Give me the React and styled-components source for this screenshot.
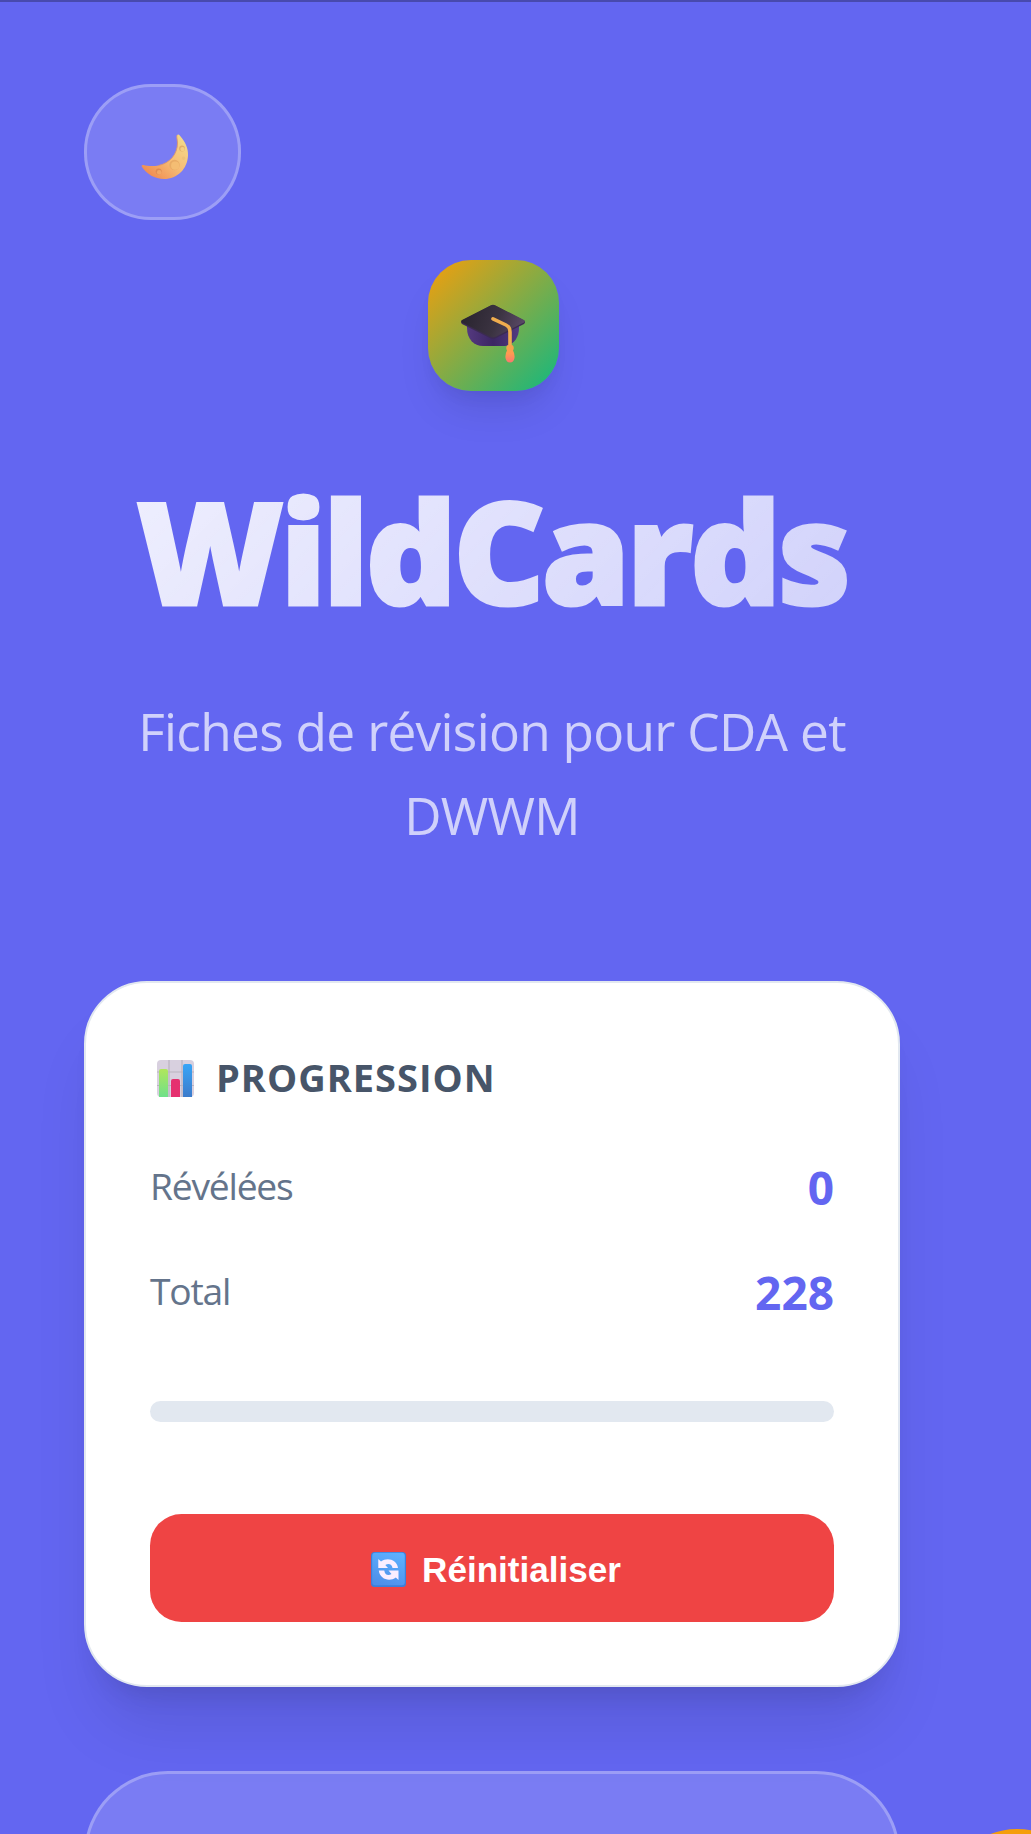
import React from "react";
import styled, { createGlobalStyle } from "styled-components";

const GlobalStyle = createGlobalStyle`
  *, *::before, *::after { box-sizing: border-box; }
  html, body { margin: 0; padding: 0; background: #6366f1; }
  body { font-family: "Open Sans", "Noto Sans", sans-serif; }
`;

const Page = styled.div`
  position: relative;
  height: 1834px;
  overflow: hidden;
  padding: 82px 131px 0 84px;
  background: #6366f1;
  border-top: 2px solid #484aae;
`;

const ThemeToggle = styled.button`
  display: flex;
  align-items: center;
  justify-content: center;
  width: 157px;
  height: 136px;
  padding: 10px 0 0 5px;
  border: 3px solid rgba(255, 255, 255, 0.26);
  border-radius: 67px;
  background: rgba(255, 255, 255, 0.15);
`;

const Hero = styled.header`
  display: flex;
  flex-direction: column;
  align-items: center;
  padding-top: 40px;
`;

const Logo = styled.div`
  display: flex;
  align-items: center;
  justify-content: center;
  width: 131px;
  height: 131px;
  margin-left: 3px;
  padding-right: 1px;
  border-radius: 43px;
  background: linear-gradient(135deg, #f59e0b, #10b981);
  box-shadow: 0 26px 39px -8px rgba(0, 0, 0, 0.1), 0 10px 16px -5px rgba(0, 0, 0, 0.05);
`;

const Title = styled.h1`
  margin: 61px 0 0;
  padding: 0 10px;
  font-size: 142px;
  font-weight: 800;
  line-height: 196px;
  letter-spacing: -3.5px;
  white-space: nowrap;
  color: transparent;
  -webkit-text-stroke: 3px transparent;
  background: linear-gradient(135deg, rgba(255, 255, 255, 0.9), rgba(255, 255, 255, 0.7));
  background-clip: text;
  -webkit-background-clip: text;
`;

const Subtitle = styled.p`
  margin: 41px 0 0;
  width: 740px;
  font-size: 51.4px;
  line-height: 84px;
  letter-spacing: -0.7px;
  text-align: center;
  color: rgba(255, 255, 255, 0.7);
`;

const Card = styled.section`
  height: 706px;
  margin-top: 124px;
  padding: 61px 64px 0;
  border: 2px solid #e2e8f0;
  border-radius: 63px;
  background: #fff;
  box-shadow: 0 52px 65px -13px rgba(0, 0, 0, 0.1), 0 21px 26px -15px rgba(0, 0, 0, 0.1);
`;

const CardTitle = styled.h2`
  display: flex;
  align-items: center;
  gap: 22px;
  height: 66px;
  margin: 0 0 21px;
  padding-left: 7px;
  font-size: 38px;
  font-weight: 700;
  letter-spacing: 1px;
  color: #475569;
`;

const Stat = styled.div`
  display: flex;
  align-items: center;
  justify-content: space-between;
  height: 105px;
`;

const StatLabel = styled.span`
  padding-top: 3px;
  font-size: 37.2px;
  letter-spacing: -1.2px;
  color: #64748b;
`;

const StatValue = styled.span`
  padding-top: 6px;
  font-size: 46px;
  font-weight: 700;
  color: #6366f1;
`;

const Track = styled.div`
  height: 21px;
  margin-top: 60px;
  border-radius: 10.5px;
  background: #e2e8f0;
`;

const ResetButton = styled.button`
  display: flex;
  align-items: center;
  justify-content: center;
  gap: 16px;
  width: 100%;
  height: 108px;
  margin-top: 92px;
  padding: 4px 0 0 8px;
  border: 0;
  border-radius: 31.5px;
  background: #ef4444;
  color: #fff;
  font: 700 35.1px "Liberation Sans", Arial, sans-serif;
`;

const Panel = styled.section`
  height: 300px;
  margin-top: 84px;
  border: 3px solid rgba(255, 255, 255, 0.26);
  border-radius: 84px;
  background: rgba(255, 255, 255, 0.15);
`;

const FloatingButton = styled.button`
  position: absolute;
  top: 1827px;
  left: 944px;
  width: 146px;
  height: 146px;
  border: 0;
  border-radius: 50%;
  background: #f59e0b;
`;

const Icon = styled.svg`
  display: block;
  flex: none;
  margin-top: ${(p) => p.$offset || 0}px;
`;

const MoonIcon = () => (
  <Icon width="48" height="46" viewBox="0 0 48 46" aria-hidden="true">
    <defs>
      <linearGradient id="moon" x1="0.9" y1="0.1" x2="0.15" y2="0.9">
        <stop offset="0" stopColor="#f3d988" />
        <stop offset="0.5" stopColor="#f6bd76" />
        <stop offset="1" stopColor="#f08d52" />
      </linearGradient>
    </defs>
    <path d="M36 1.2C37 .1 38 .6 39 1.8C44 7.500 47.400 14 47 21.500C46.400 35 36.500 45 23 45C14 45 5.500 40 1 33C.2 31.500 .8 30.700 2.500 31C6 32 12 32.600 17.500 31.500C29 29.200 36.500 20 36.500 9C36.500 6 35.300 3 36 1.200Z" fill="url(#moon)" />
    <path d="M36 1.200C35.300 3 36.500 6 36.500 9C36.500 20 29 29.200 17.500 31.500" fill="none" stroke="#d99570" strokeWidth="0.9" />
    <circle cx="33.500" cy="31" r="5.200" fill="#e9ac66" />
    <circle cx="34.200" cy="31.700" r="4.100" fill="#f4bd73" />
    <circle cx="17.700" cy="37.500" r="3" fill="#de8b52" />
    <circle cx="18.200" cy="38.200" r="2.300" fill="#f2a765" />
    <circle cx="41" cy="14.500" r="2.900" fill="#e1ae68" />
    <circle cx="41.500" cy="15.100" r="2.200" fill="#f5cf83" />
    <circle cx="42.600" cy="24.300" r="1.700" fill="#eec278" />
  </Icon>
);

const CapIcon = () => (
  <Icon width="66" height="60" viewBox="0 0 66 60" $offset={16} aria-hidden="true">
    <defs>
      <linearGradient id="capBase" x1="0" y1="0" x2="1" y2="0">
        <stop offset="0" stopColor="#54397f" />
        <stop offset="0.5" stopColor="#3c2763" />
        <stop offset="1" stopColor="#513b80" />
      </linearGradient>
      <linearGradient id="capTop" x1="0" y1="0.4" x2="1" y2="0.6">
        <stop offset="0" stopColor="#29242f" />
        <stop offset="0.55" stopColor="#3b3341" />
        <stop offset="1" stopColor="#5b4a68" />
      </linearGradient>
      <linearGradient id="tassel" x1="0" y1="0" x2="0" y2="1">
        <stop offset="0" stopColor="#f5a448" />
        <stop offset="0.5" stopColor="#ff9a52" />
        <stop offset="1" stopColor="#f9766f" />
      </linearGradient>
    </defs>
    <path d="M7 19H59V24C59 35 52 42 43 42H23C14 42 7 35 7 24Z" fill="url(#capBase)" />
    <path d="M2 16.400L30.500 1.700Q33 .4 35.500 1.700L64 16.400Q66 18 64 20L36 34Q33 35.600 30 34L2 20Q0 18 2 16.400Z" fill="#3b2b50" />
    <path d="M2 16L30.500 1.500Q33 .2 35.500 1.500L64 16Q65.500 17.200 64 18.400L36 32.500Q33 34 30 32.500L2 18.400Q.5 17.200 2 16Z" fill="url(#capTop)" />
    <path d="M33 14.800L46 21Q50 23 50 28V42" fill="none" stroke="#f0ad4e" strokeWidth="3.600" strokeLinecap="round" />
    <path d="M47 41.500Q50 40 53 41.500Q54.500 44 53 46.500Q55 50 54.500 54Q53.500 58.500 50 58.500Q46.500 58.500 45.500 54Q45 50 47 46.500Q45.500 44 47 41.500Z" fill="url(#tassel)" />
  </Icon>
);

const ChartIcon = () => (
  <Icon width="37" height="37" viewBox="0 0 37 37" $offset={2} aria-hidden="true">
    <defs>
      <linearGradient id="green" x1="0" y1="0" x2="0" y2="1">
        <stop offset="0" stopColor="#b0e65c" />
        <stop offset="1" stopColor="#6fe08a" />
      </linearGradient>
      <linearGradient id="blue" x1="0" y1="0" x2="0" y2="1">
        <stop offset="0" stopColor="#38a5f7" />
        <stop offset="1" stopColor="#3c7bcb" />
      </linearGradient>
    </defs>
    <rect width="37" height="37" rx="4" fill="#d8d0df" />
    <path d="M12 0V37M25 0V37M0 12H37M0 25.500H37" stroke="#b9b3c0" strokeWidth="1.200" />
    <path d="M2 37V11Q2 9 4 9H9Q11 9 11 11V37Z" fill="url(#green)" />
    <path d="M14 37V21Q14 19 16 19H21Q23 19 23 21V37Z" fill="#e5306f" />
    <path d="M26 37V6Q26 4 28 4H33Q35 4 35 6V37Z" fill="url(#blue)" />
  </Icon>
);

const RefreshIcon = () => (
  <Icon width="35" height="35" viewBox="0 0 35 35" $offset={-1} aria-hidden="true">
    <defs>
      <linearGradient id="tile" x1="0.7" y1="0" x2="0.3" y2="1">
        <stop offset="0" stopColor="#5cb0ff" />
        <stop offset="1" stopColor="#4f8fe9" />
      </linearGradient>
    </defs>
    <rect width="35" height="35" rx="3.500" fill="#3d7fda" />
    <rect x="1.200" y="0.800" width="32.600" height="32.400" rx="3" fill="url(#tile)" />
    <g fill="#fbeeff">
      <path d="M7.300 7L10 9.500C16 5 26 7.500 27 16H21.500C21 12 17.500 11 14.300 13L17 16H7.300Z" />
      <path d="M27.500 28L24.800 25.500C18.800 30 8.800 27.500 7.800 18.500H13.300C13.800 23 17.300 24 20.500 22L17.500 18.500H27.500Z" />
    </g>
  </Icon>
);

export default function App() {
  return (
    <>
      <GlobalStyle />
      <Page>
        <ThemeToggle aria-label="Thème">
          <MoonIcon />
        </ThemeToggle>
        <Hero>
          <Logo>
            <CapIcon />
          </Logo>
          <Title>WildCards</Title>
          <Subtitle>Fiches de révision pour CDA et DWWM</Subtitle>
        </Hero>
        <Card>
          <CardTitle>
            <ChartIcon />
            PROGRESSION
          </CardTitle>
          <Stat>
            <StatLabel>Révélées</StatLabel>
            <StatValue>0</StatValue>
          </Stat>
          <Stat>
            <StatLabel>Total</StatLabel>
            <StatValue>228</StatValue>
          </Stat>
          <Track />
          <ResetButton>
            <RefreshIcon />
            Réinitialiser
          </ResetButton>
        </Card>
        <Panel />
        <FloatingButton aria-label="Menu" />
      </Page>
    </>
  );
}
